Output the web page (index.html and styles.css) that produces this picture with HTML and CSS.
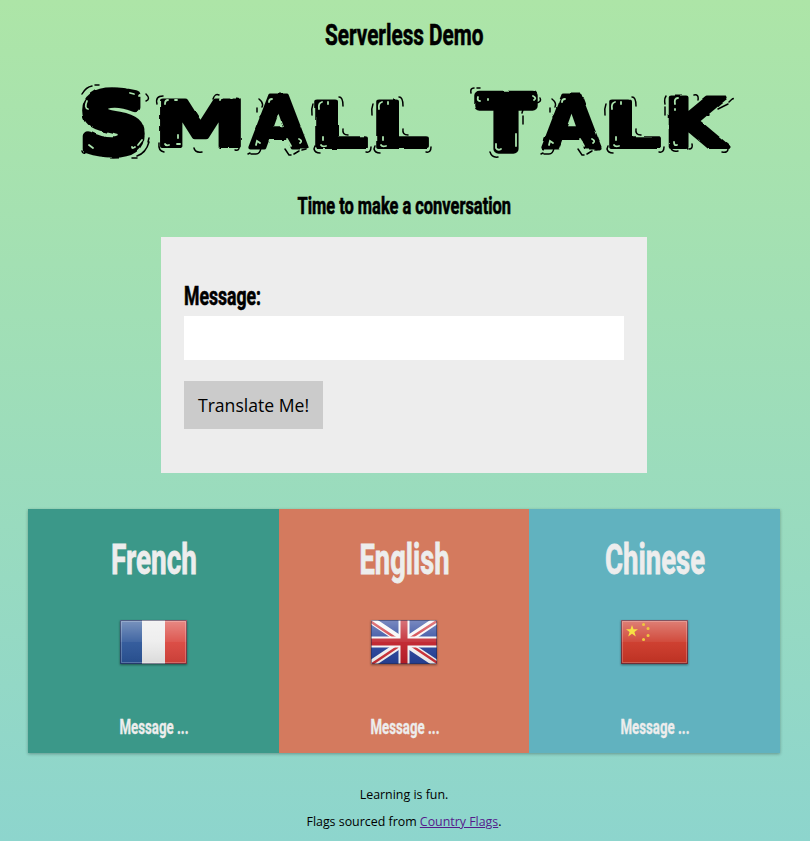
FILE: index.html
```html
<!DOCTYPE html>
<html lang="en">
<head>
<meta charset="utf-8">
<title>Small Talk</title>
<link rel="stylesheet" href="styles.css">
</head>
<body>
<header>
<h2 class="eyebrow"><svg class="display" width="810" height="50"><text x="325" y="35" font-size="30" textLength="158.500" lengthAdjust="spacingAndGlyphs">Serverless Demo</text></svg></h2>
<h1 class="brand"><svg width="810" height="90" viewBox="0 75 810 90">
<defs>
<filter id="rough" x="-2%" y="-10%" width="104%" height="120%"><feTurbulence type="fractalNoise" baseFrequency=".09" numOctaves="1" seed="4"/><feDisplacementMap in="SourceGraphic" scale="3" xChannelSelector="R" yChannelSelector="G"/></filter>
<g id="a-marks"><path d="M259 99q5 4 3 8m-5 1v4m7 0l-4 5m-12 37l2-1m1 1h5q4 0 5-6m24 1l4 6h2m3-1l5-3m3-1l4-1"/><path class="shine" d="M269 102q0-3 3-3m-16 46l1-4 3 2m31 3l-4-7m12 0q4 2 1 4"/></g>
<g id="l-marks"><path d="M313 104q-2 5-1 11m27-18q4 0 4 9m0 23q-1 6 5 6m-33 11l-1 3q1 4 6 4m46-1q5 1 5-5"/><path class="shine" d="M319 109q-1-6 3-7m6 0v2m-7 41q1 2 5 1m-3-9v3"/></g>
</defs>
<g class="ink" filter="url(#rough)"><text>
<tspan class="heavy" x="81" y="152" font-size="80" textLength="65" lengthAdjust="spacingAndGlyphs">S</tspan><tspan x="154.500" y="146" font-size="63" textLength="92" lengthAdjust="spacingAndGlyphs">M</tspan><tspan x="250" y="147" font-size="72" textLength="57" lengthAdjust="spacingAndGlyphs">A</tspan><tspan x="309.700" y="146.500" font-size="63" textLength="57.800" lengthAdjust="spacingAndGlyphs">L</tspan><tspan x="370.700" y="146.500" font-size="63" textLength="57.800" lengthAdjust="spacingAndGlyphs">L</tspan>
<tspan class="heavy" x="479" y="149" font-size="73" textLength="54" lengthAdjust="spacingAndGlyphs">T</tspan><tspan x="543" y="147" font-size="72" textLength="57" lengthAdjust="spacingAndGlyphs">A</tspan><tspan x="603.700" y="146.500" font-size="63" textLength="57.800" lengthAdjust="spacingAndGlyphs">L</tspan><tspan x="663.700" y="146.500" font-size="67" textLength="62" lengthAdjust="spacingAndGlyphs">K</tspan></text></g>
<path class="marks" d="M82 94q4-7 10-8m3-1h4M146 94q5 5 0 7M82 151q1 3 3 2M149 138l-1 4m1 0q-3 11-12 14m-5 2h5M157 104q-2-8 6-8M213 99q2-6 6-4M159 143q-1 8 5 9m30-4q1 5 8 4m33-2q5 1 4-4"/>
<path class="shine" d="M87 101q-3 7 1 8M130 93l4 1m5 2q1-2 2 0M89 145l4 3M142 140l-4 5m-3 2q-3 2-3 0M165 104q0-4 3-4m7 0h2M220 100q0-2 2-2m9 0h1M165 144q1 2 4 1m9-10v3m-1 6h3"/>
<use href="#a-marks"/><use href="#a-marks" x="293"/>
<use href="#l-marks"/><use href="#l-marks" x="60"/><use href="#l-marks" x="293"/>
<path class="marks" d="M471 93q-1-5 3-5m3 0h3M540 98q2 4-4 5M524 106l-2 7m1 3v8M490 152q2 6 8 5M666 96q-2 3-1 8m0 3v8M694 95q5-1 4 5M733 99q1-2-4 3m-1 2l-10 5M671 148q1 4 7 3m11-2q4 0 3-5M722 152q6 1 6-3"/>
<path class="shine" d="M478 97q-1 4 2 4m8-2v1M533 96q4 2 1 4M516 134l0 12M496 144v4q2 3 5 1M675 104q-1-6 3-6m-3 11v1M674 142q0 4 3 3"/>
</svg></h1>
<h3 class="tagline"><svg class="display" width="810" height="40"><text x="297.500" y="18.500" font-size="23.500" textLength="213.500" lengthAdjust="spacingAndGlyphs">Time to make a conversation</text></svg></h3>
</header>
<main>
<form class="composer">
<label for="message"><svg class="display" width="90" height="40"><text x="0" y="29" font-size="25.500" textLength="77" lengthAdjust="spacingAndGlyphs">Message:</text></svg></label>
<input id="message" type="text">
<button type="button">Translate Me!</button>
</form>
<section class="languages">
<article class="card french">
<h2><svg class="display" width="120" height="50"><text x="17" y="40.500" font-size="42" textLength="86" lengthAdjust="spacingAndGlyphs">French</text></svg></h2>
<svg class="flag" width="67" height="45" viewBox="0 0 67 45"><defs><linearGradient id="gloss" x2="0" y2="1"><stop stop-color="#fff" stop-opacity=".38"/><stop offset=".49" stop-color="#fff" stop-opacity=".12"/><stop offset=".5" stop-color="#fff" stop-opacity=".06"/><stop offset="1" stop-color="#000" stop-opacity=".08"/></linearGradient></defs><path fill="#295397" d="M0 0h22v44H0z"/><path fill="#ececec" d="M22 0h23v44H22z"/><path fill="#d9433b" d="M45 0h22v44H45z"/><path fill="url(#gloss)" d="M0 0h67v44H0z"/><path class="edge" d="M.5.5h66v43H.5z"/><path class="glow" d="M1.500 1.500h64v41h-64z"/></svg>
<p><svg class="display" width="90" height="30"><text x="10.500" y="19.500" font-size="20" textLength="69" lengthAdjust="spacingAndGlyphs">Message ...</text></svg></p>
</article>
<article class="card english">
<h2><svg class="display" width="120" height="50"><text x="15.500" y="40.500" font-size="42" textLength="90" lengthAdjust="spacingAndGlyphs">English</text></svg></h2>
<svg class="flag" width="67" height="45" viewBox="0 0 67 45"><defs><clipPath id="uk"><path d="M0 0h66v44H0z"/></clipPath></defs><g clip-path="url(#uk)"><path fill="#27429a" d="M0 0h66v44H0z"/><path stroke="#f7f7f7" stroke-width="7.500" d="M0 0l66 44M66 0L0 44"/><path stroke="#cd2f36" stroke-width="2.500" d="M-1 1l27 18M66 1L38 19M1 44l27-18M41 26l27 18"/><path stroke="#f7f7f7" stroke-width="11" d="M33 0v44M0 22h66"/><path stroke="#bf1e28" stroke-width="7" d="M33 0v44M0 22h66"/></g><path fill="url(#gloss)" d="M0 0h66v44H0z"/><path class="edge" d="M.5.5h65v43H.5z"/></svg>
<p><svg class="display" width="90" height="30"><text x="11.500" y="19.500" font-size="20" textLength="69" lengthAdjust="spacingAndGlyphs">Message ...</text></svg></p>
</article>
<article class="card chinese">
<h2><svg class="display" width="120" height="50"><text x="10" y="40.500" font-size="42" textLength="100" lengthAdjust="spacingAndGlyphs">Chinese</text></svg></h2>
<svg class="flag" width="67" height="45" viewBox="0 0 67 45"><path fill="#cb3424" d="M0 0h67v44H0z"/><path fill="url(#gloss)" d="M0 0h67v44H0z"/><path fill="#f7e044" d="M11 5l1.500 4.300H17l-3.600 2.800 1.400 4.300L11 13.800l-3.800 2.600 1.400-4.300L5 9.300h4.500z"/><path stroke="#efc63e" stroke-width="3" stroke-linecap="round" d="M22.500 4.500h.1M27 8.500h.1M27 15.500h.1M22.500 19.500h.1"/><path class="edge" d="M.5.5h66v43H.5z"/><path class="glow" d="M1.500 1.500h64v41h-64z"/></svg>
<p><svg class="display" width="90" height="30"><text x="10.500" y="19.500" font-size="20" textLength="69" lengthAdjust="spacingAndGlyphs">Message ...</text></svg></p>
</article>
</section>
</main>
<footer><p>Learning is fun.</p><p>Flags sourced from <a href="#">Country Flags</a>.</p></footer>
</body>
</html>
```
FILE: styles.css
```css
* { box-sizing: border-box; }
html { height: 100%; }
body {
  margin: 0;
  height: 841px;
  padding-top: 10px;
  overflow: hidden;
  background: linear-gradient(#ade5a7, #8dd5cd);
  font-family: "Open Sans", sans-serif;
}
h1, h2, h3, p { margin: 0; }
svg { display: block; overflow: visible; }
.display { font-family: Roboto, "Liberation Sans", sans-serif; font-weight: 700; fill: currentColor; stroke: currentColor; stroke-width: .6; }
.eyebrow { height: 65px; }
.brand { height: 90px; }
.tagline { height: 42px; margin-top: 30px; }
.ink { font: 700 63px "DejaVu Sans", sans-serif; fill: #000; stroke: #000; stroke-width: 4; stroke-linejoin: round; }
.heavy { stroke-width: 9.5; }
.marks, #a-marks, #l-marks { fill: none; stroke: #000; stroke-width: 1.5; stroke-linecap: round; }
.shine { fill: none; stroke: #a9e2ac; stroke-width: 1.8; stroke-linecap: round; }
.composer { width: 486px; height: 236px; margin-left: 161px; padding: 39px 23px 0; background: #ededed; }
.composer label { display: block; height: 40px; }
.composer input { display: block; width: 440px; height: 44px; padding: 0 12px; border: 0; background: #fff; }
.composer button { display: block; width: 139px; height: 48px; margin-top: 21px; padding: 0; border: 0; background: #cbcbcb; color: #000; font: 17.6px "Open Sans", sans-serif; }
.languages { display: grid; grid-template-columns: 251px 250px 251px; width: 752px; height: 244px; margin: 36px 0 0 28px; box-shadow: 0 1px 3px rgba(0, 0, 0, .3); }
.card { display: flex; flex-direction: column; align-items: center; padding-top: 24px; color: #ededed; }
.card h2 { height: 50px; }
.card .display { stroke-width: .8; }
.card p .display { stroke-width: .3; }
.card .flag { margin-top: 37px; filter: drop-shadow(0 1px 1px rgba(0, 0, 0, .45)); }
.card p { margin-top: 49px; }
.card p svg { height: 30px; }
.french { background: #3b9889; }
.english { background: #d47a5e; }
.chinese { background: #61b2bf; }
.edge { fill: none; stroke: #25284a; stroke-opacity: .5; }
.glow { fill: none; stroke: #fff; stroke-opacity: .22; }
footer { margin-top: 33px; text-align: center; font-size: 12.4px; line-height: 17px; padding-right: 2px; }
footer p + p { margin-top: 10px; }
footer a { color: #551a8b; }
```
